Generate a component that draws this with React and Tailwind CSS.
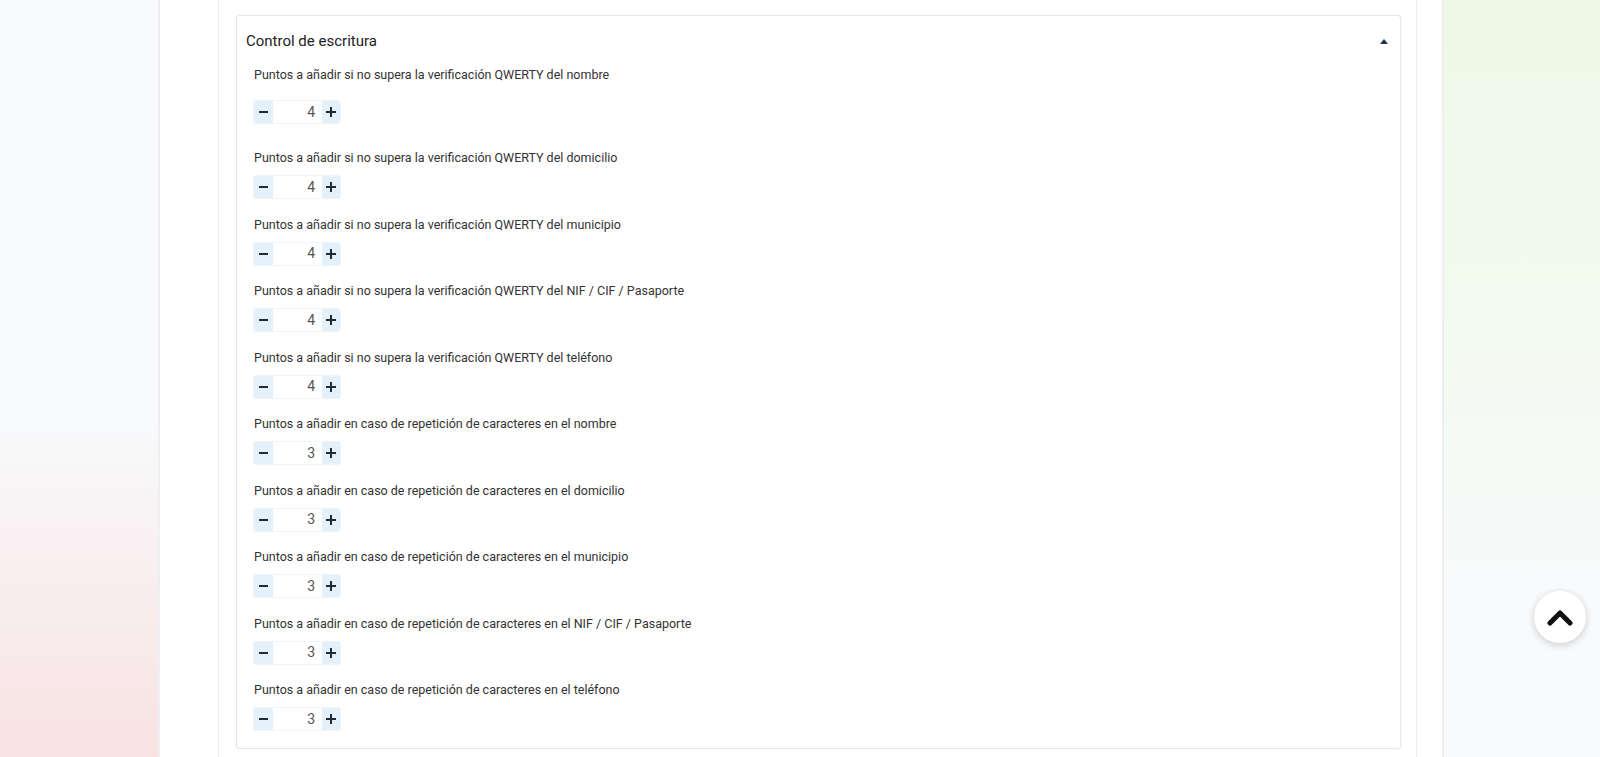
import React, { useState } from 'react'

const initialFields = [
  { label: 'Puntos a añadir si no supera la verificación QWERTY del nombre', value: 4 },
  { label: 'Puntos a añadir si no supera la verificación QWERTY del domicilio', value: 4 },
  { label: 'Puntos a añadir si no supera la verificación QWERTY del municipio', value: 4 },
  { label: 'Puntos a añadir si no supera la verificación QWERTY del NIF / CIF / Pasaporte', value: 4 },
  { label: 'Puntos a añadir si no supera la verificación QWERTY del teléfono', value: 4 },
  { label: 'Puntos a añadir en caso de repetición de caracteres en el nombre', value: 3 },
  { label: 'Puntos a añadir en caso de repetición de caracteres en el domicilio', value: 3 },
  { label: 'Puntos a añadir en caso de repetición de caracteres en el municipio', value: 3 },
  { label: 'Puntos a añadir en caso de repetición de caracteres en el NIF / CIF / Pasaporte', value: 3 },
  { label: 'Puntos a añadir en caso de repetición de caracteres en el teléfono', value: 3 },
]

function Stepper({ value, onChange }) {
  return (
    <div className="flex h-[22px] w-[86px] items-stretch rounded-[2px] bg-[#e4f1fb] shadow-[0_0_0_1px_#eef5fb]">
      <button
        onClick={() => onChange(value - 1)}
        className="flex w-[19px] items-center justify-center"
      >
        <span className="block h-[2px] w-[9px] bg-[#1d2b3a]" />
      </button>
      <div className="flex flex-1 items-center justify-end bg-white pr-[7px] text-[14px] text-[#555]">
        {value}
      </div>
      <button
        onClick={() => onChange(value + 1)}
        className="relative flex w-[18px] items-center justify-center"
      >
        <span className="block h-[2px] w-[10px] bg-[#1d2b3a]" />
        <span className="absolute h-[10px] w-[2px] bg-[#1d2b3a]" />
      </button>
    </div>
  )
}

export default function App() {
  const [fields, setFields] = useState(initialFields)
  const [open, setOpen] = useState(true)

  const setValue = (i, v) => {
    setFields(fields.map((f, idx) => (idx === i ? { ...f, value: v } : f)))
  }

  return (
    <div className="flex h-[757px] w-full overflow-hidden bg-white font-['Roboto',sans-serif]">
      {/* Left backdrop */}
      <div className="w-[160px] shrink-0 border-r-2 border-[#efeff1] bg-linear-to-b from-[#f8fafc] from-55% to-[#f8e2e2]" />

      {/* Main */}
      <div className="flex flex-1 bg-white">
        <div className="ml-[58px] mr-[25px] flex-1 border-x border-[#ececec] pl-[17px] pr-[15px] pt-[15px]">
          <div className="rounded-[3px] border border-[#e6e6e6] bg-white shadow-[0_0_3px_rgba(0,0,0,0.05)]">
            <button
              onClick={() => setOpen(!open)}
              className="flex h-[50px] w-full items-center justify-between pl-[9px] pr-[12px] text-left"
            >
              <span className="text-[15px] text-[#222]">Control de escritura</span>
              <svg width="8" height="5" viewBox="0 0 8 5" className={open ? '' : 'rotate-180'}>
                <path d="M4 0L8 5H0z" fill="#1c3553" />
              </svg>
            </button>
            {open && (
              <div className="pb-[18px] pl-[17px]">
                {fields.map((f, i) => (
                  <div key={i} className={i === 0 ? 'mb-[26px]' : 'mb-[17.5px] last:mb-0'}>
                    <div className={'text-[12.5px] leading-[18px] text-[#333] ' + (i === 0 ? 'mb-[17px]' : 'mb-[9px]')}>
                      {f.label}
                    </div>
                    <Stepper value={f.value} onChange={(v) => setValue(i, v)} />
                  </div>
                ))}
              </div>
            )}
          </div>
        </div>
      </div>

      {/* Right backdrop */}
      <div className="w-[158px] shrink-0 border-l-2 border-[#efeff1] bg-linear-to-b from-[#eef9e7] via-[#f3faf0] via-45% to-[#f8fafc] to-80%" />

      {/* Scroll to top */}
      <button className="fixed bottom-[114px] right-[14px] flex h-[52px] w-[52px] items-center justify-center rounded-full bg-white shadow-[0_2px_8px_rgba(0,0,0,0.18)]">
        <svg width="26" height="18" viewBox="0 0 26 18">
          <path d="M3 15L13 5l10 10" fill="none" stroke="#111" strokeWidth="5" strokeLinecap="round" strokeLinejoin="round" />
        </svg>
      </button>
    </div>
  )
}
